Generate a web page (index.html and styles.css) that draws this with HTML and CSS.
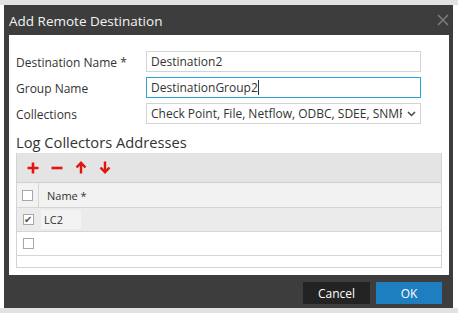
FILE: index.html
```html
<!DOCTYPE html>
<html lang="en">
<head>
    <meta charset="UTF-8">
    <title>Add Remote Destination</title>
    <link rel="stylesheet" href="styles.css">
</head>
<body>
    <div class="dialog">
        <div class="dialog-title">
            <span>Add Remote Destination</span>
            <svg class="close-btn" width="12" height="12" viewBox="0 0 12 12">
                <path d="M1 1 L11 11 M11 1 L1 11" stroke="#7b7b7b" stroke-width="1.6"/>
            </svg>
        </div>

        <div class="dialog-body">
            <div class="form-row">
                <label>Destination Name *</label>
                <div class="field">Destination2</div>
            </div>
            <div class="form-row">
                <label>Group Name</label>
                <div class="field focused">DestinationGroup2<span class="caret"></span></div>
            </div>
            <div class="form-row">
                <label>Collections</label>
                <div class="field select">
                    <span class="select-text">Check Point, File, Netflow, ODBC, SDEE, SNMP</span>
                    <svg class="chevron" width="9" height="6" viewBox="0 0 9 6">
                        <path d="M1 1 L4.5 4.5 L8 1" fill="none" stroke="#444" stroke-width="1.5"/>
                    </svg>
                </div>
            </div>

            <h2 class="section-title">Log Collectors Addresses</h2>

            <div class="grid">
                <div class="toolbar">
                    <svg class="tool" width="12" height="12" viewBox="0 0 12 12">
                        <path d="M6 0.5 V11.5 M0.5 6 H11.5" stroke="#e2160f" stroke-width="2.6"/>
                    </svg>
                    <svg class="tool" width="12" height="12" viewBox="0 0 12 12">
                        <path d="M0.5 6 H11.5" stroke="#e2160f" stroke-width="2.6"/>
                    </svg>
                    <svg class="tool" width="12" height="13" viewBox="0 0 12 13">
                        <path d="M6 12.5 V2.5 M1.5 6.5 L6 1.8 L10.5 6.5" fill="none" stroke="#e2160f" stroke-width="2.4"/>
                    </svg>
                    <svg class="tool" width="12" height="13" viewBox="0 0 12 13">
                        <path d="M6 0.5 V10.5 M1.5 6.5 L6 11.2 L10.5 6.5" fill="none" stroke="#e2160f" stroke-width="2.4"/>
                    </svg>
                </div>
                <div class="grid-row header">
                    <div class="check-cell"><span class="checkbox"></span></div>
                    <div class="name-cell">Name *</div>
                </div>
                <div class="grid-row selected">
                    <div class="check-cell"><span class="checkbox checked">&#10004;</span></div>
                    <div class="name-cell"><span class="cell-value">LC2</span></div>
                </div>
                <div class="grid-row">
                    <div class="check-cell"><span class="checkbox"></span></div>
                    <div class="name-cell"></div>
                </div>
                <div class="grid-filler"></div>
            </div>
        </div>

        <div class="dialog-footer">
            <button class="btn btn-cancel">Cancel</button>
            <button class="btn btn-ok">OK</button>
        </div>
    </div>
</body>
</html>
```

FILE: styles.css
```css
* {
    margin: 0;
    padding: 0;
    box-sizing: border-box;
    font-family: 'Open Sans', sans-serif;
}

html {
    background: linear-gradient(#e2e2e2 5px, #fff 5px);
}

body {
    padding: 5px 0 0 4px;
}

.dialog {
    width: 449px;
    height: 303px;
    background: #3d3d3d;
    display: flex;
    flex-direction: column;
}

.dialog-title {
    height: 30px;
    padding: 1px 4px 0 5px;
    display: flex;
    align-items: center;
    justify-content: space-between;
    color: #f4f4f4;
    font-size: 13.5px;
}

.close-btn {
    margin-top: -2px;
}

.dialog-body {
    background: #fff;
    margin: 0 4px 0 5px;
    height: 240px;
    padding: 16px 7px 7px 7px;
}

.form-row {
    display: grid;
    grid-template-columns: 130px 275px;
    align-items: center;
    margin-bottom: 5px;
    font-size: 12px;
    color: #333;
}

.form-row label {
    padding-top: 1px;
}

.field {
    height: 21px;
    border: 1px solid #d3d3d3;
    padding: 0 4px;
    line-height: 18px;
    color: #333;
    display: flex;
    align-items: center;
    white-space: nowrap;
    overflow: hidden;
}

.field.focused {
    border-color: #29a3d9;
}

.caret {
    display: inline-block;
    width: 1px;
    height: 15px;
    background: #333;
}

.select {
    justify-content: space-between;
    padding-right: 4px;
}

.select-text {
    overflow: hidden;
    width: 251px;
}

.chevron {
    flex: none;
}

.section-title {
    font-weight: normal;
    font-size: 14.7px;
    color: #333;
    line-height: 22px;
    margin-top: 7px;
}

.grid {
    border: 1px solid #d3d3d3;
    border-top: none;
    width: 426px;
}

.toolbar {
    height: 30px;
    background: #e4e4e4;
    display: flex;
    align-items: center;
    gap: 12px;
    padding-left: 10px;
    border-bottom: 1px solid #d0d0d0;
}

.grid-row {
    height: 24px;
    display: flex;
    align-items: center;
    border-bottom: 1px solid #d6d6d6;
    font-size: 11px;
    color: #333;
}

.grid-row.header {
    height: 25px;
    background: #f2f2f2;
}

.grid-row.selected {
    background: #ebebeb;
}

.check-cell {
    width: 22px;
    height: 100%;
    display: flex;
    align-items: center;
    justify-content: center;
}

.header .check-cell {
    border-right: 1px solid #d6d6d6;
}

.name-cell {
    padding-left: 7px;
}

.header .name-cell {
    padding-left: 8px;
}

.checkbox {
    width: 11px;
    height: 11px;
    border: 1px solid #a8a8a8;
    background: #fff;
    font-size: 10px;
    line-height: 9px;
    text-align: center;
    color: #555;
}

.cell-value {
    display: inline-block;
    background: #f3f3f3;
    width: 40px;
    height: 19px;
    line-height: 19px;
    padding-left: 3px;
    margin-left: -5px;
}

.grid-filler {
    height: 11px;
}

.dialog-footer {
    flex: 1;
    display: flex;
    justify-content: flex-end;
    align-items: flex-start;
    gap: 6px;
    padding: 7px 11px 0 0;
}

.btn {
    height: 22px;
    border: none;
    color: #fff;
    font-size: 12px;
    cursor: pointer;
}

.btn-cancel {
    width: 67px;
    background: #232323;
}

.btn-ok {
    width: 66px;
    background: #1d7fbf;
}
```
